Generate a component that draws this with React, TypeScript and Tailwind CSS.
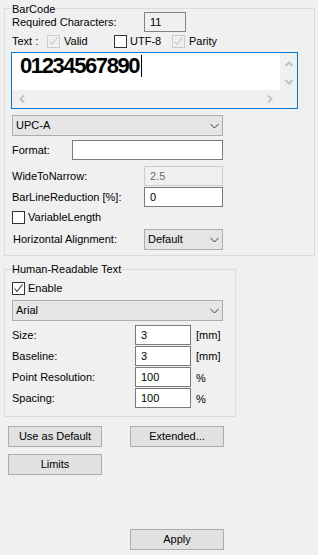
import React from 'react';

function CheckBox({ checked = false, disabled = false }: { checked?: boolean; disabled?: boolean }) {
  return (
    <span
      className={
        disabled
          ? 'flex h-[13px] w-[13px] shrink-0 items-center justify-center border border-[#cccccc] bg-[#f0f0f0]'
          : 'flex h-[13px] w-[13px] shrink-0 items-center justify-center border border-[#333333] bg-white'
      }
    >
      {checked && (
        <svg width="11" height="11" viewBox="0 0 11 11">
          <polyline
            points="1.5,5.5 4,8.5 9.5,1.5"
            fill="none"
            stroke={disabled ? '#c6c6c6' : '#333333'}
            strokeWidth="1.1"
          />
        </svg>
      )}
    </span>
  );
}

function Chevron() {
  return (
    <svg width="9" height="6" viewBox="0 0 9 6" className="shrink-0">
      <polyline points="0.5,1 4.5,5 8.5,1" fill="none" stroke="#3c3c3c" strokeWidth="1" />
    </svg>
  );
}

function Dropdown({ value }: { value: string }) {
  return (
    <div className="flex h-[21px] items-center justify-between border border-[#adadad] bg-[#e5e5e5] pl-[3px] pr-[3px]">
      <span>{value}</span>
      <Chevron />
    </div>
  );
}

function Field({ value, disabled = false }: { value?: string; disabled?: boolean }) {
  return (
    <div
      className={
        disabled
          ? 'flex h-[20px] items-center border border-[#cccccc] bg-[#f0f0f0] pl-[5px] text-[#6d6d6d]'
          : 'flex h-[20px] items-center border border-[#7a7a7a] bg-white pl-[5px]'
      }
    >
      {value}
    </div>
  );
}

function Button({ label }: { label: string }) {
  return (
    <div className="flex h-[21px] w-[94px] items-center justify-center border border-[#adadad] bg-[#e1e1e1]">
      {label}
    </div>
  );
}

function ArrowIcon({ dir }: { dir: 'up' | 'down' | 'left' | 'right' }) {
  const pts = {
    up: '0.5,5 4,1.5 7.5,5',
    down: '0.5,1 4,4.5 7.5,1',
    left: '5,0.5 1.5,4 5,7.5',
    right: '1,0.5 4.5,4 1,7.5',
  }[dir];
  const vertical = dir === 'up' || dir === 'down';
  return (
    <svg width={vertical ? 8 : 6} height={vertical ? 6 : 8} viewBox={vertical ? '0 0 8 6' : '0 0 6 8'}>
      <polyline points={pts} fill="none" stroke="#c2c2c2" strokeWidth="2" />
    </svg>
  );
}

export default function App() {
  return (
    <div className="h-[555px] w-[318px] overflow-hidden bg-[#f0f0f0] pt-[8px] font-['Liberation_Sans',Arial,sans-serif] text-[11px] leading-[13px] text-black">
      {/* BarCode group */}
      <div className="relative ml-[4px] h-[248px] w-[311px] border border-[#dcdcdc] pl-[7px] pt-[3px]">
        <span className="absolute left-[6px] top-[-6px] bg-[#f0f0f0] px-[1px]">BarCode</span>

        <div className="grid h-[20px] grid-cols-[132px_42px] items-center">
          <span>Required Characters:</span>
          <div className="flex h-[20px] items-center border border-[#838383] pl-[5px]">11</div>
        </div>

        <div className="mt-[3px] flex h-[13px] items-center">
          <span className="w-[35px] shrink-0">Text :</span>
          <div className="flex w-[67px] items-center gap-[4px]">
            <CheckBox checked disabled />
            <span>Valid</span>
          </div>
          <div className="flex w-[58px] items-center gap-[3px]">
            <CheckBox />
            <span>UTF-8</span>
          </div>
          <div className="flex items-center gap-[4px]">
            <CheckBox checked disabled />
            <span>Parity</span>
          </div>
        </div>

        {/* Text box with scrollbars */}
        <div className="ml-[-1px] mt-[4px] flex h-[57px] w-[287px] flex-col border border-[#0078d7]">
          <div className="flex h-[37px]">
            <div className="flex flex-1 items-start bg-white pl-[8px] pt-[2px]">
              <span className="text-[22px] font-bold leading-[22px] tracking-[-1.4px]">01234567890</span>
              <span className="ml-[2px] h-[22px] w-px bg-black" />
            </div>
            <div className="flex w-[17px] flex-col items-center justify-between bg-[#f0f0f0] pb-[5px] pt-[8px]">
              <ArrowIcon dir="up" />
              <ArrowIcon dir="down" />
            </div>
          </div>
          <div className="flex h-[18px] items-center bg-[#f0f0f0]">
            <div className="flex w-[268px] items-center justify-between pl-[7px] pr-[7px]">
              <ArrowIcon dir="left" />
              <ArrowIcon dir="right" />
            </div>
          </div>
        </div>

        <div className="mt-[6px] w-[211px]">
          <Dropdown value="UPC-A" />
        </div>

        <div className="mt-[4px] grid grid-cols-[60px_151px] items-center">
          <span>Format:</span>
          <Field />
        </div>

        <div className="mt-[6px] grid grid-cols-[132px_79px] items-center">
          <span>WideToNarrow:</span>
          <Field value="2.5" disabled />
        </div>

        <div className="mt-[1px] grid grid-cols-[132px_79px] items-center">
          <span>BarLineReduction [%]:</span>
          <Field value="0" />
        </div>

        <div className="mt-[4px] flex h-[13px] items-center gap-[3px]">
          <CheckBox />
          <span>VariableLength</span>
        </div>

        <div className="mt-[5px] grid grid-cols-[132px_79px] items-center">
          <span className="pl-[1px]">Horizontal Alignment:</span>
          <Dropdown value="Default" />
        </div>
      </div>

      {/* Human-Readable Text group */}
      <div className="relative ml-[4px] mt-[13px] h-[148px] w-[232px] border border-[#dcdcdc] pl-[7px] pt-[12px]">
        <span className="absolute left-[6px] top-[-7px] bg-[#f0f0f0] px-[1px]">Human-Readable Text</span>

        <div className="flex h-[13px] items-center gap-[3px]">
          <CheckBox checked />
          <span>Enable</span>
        </div>

        <div className="mt-[5px] w-[211px]">
          <Dropdown value="Arial" />
        </div>

        <div className="mt-[4px] flex flex-col gap-[1px]">
          {[
            ['Size:', '3', '[mm]'],
            ['Baseline:', '3', '[mm]'],
            ['Point Resolution:', '100', '%'],
            ['Spacing:', '100', '%'],
          ].map(([label, value, unit]) => (
            <div key={label} className="grid grid-cols-[123px_56px_auto] items-center">
              <span>{label}</span>
              <Field value={value} />
              <span className={unit === '%' ? 'ml-[5px] mt-[3px]' : 'ml-[5px]'}>{unit}</span>
            </div>
          ))}
        </div>
      </div>

      {/* Buttons */}
      <div className="ml-[8px] mt-[9px] flex gap-[28px]">
        <Button label="Use as Default" />
        <Button label="Extended..." />
      </div>
      <div className="ml-[8px] mt-[7px]">
        <Button label="Limits" />
      </div>
      <div className="ml-[130px] mt-[54px]">
        <Button label="Apply" />
      </div>
    </div>
  );
}
